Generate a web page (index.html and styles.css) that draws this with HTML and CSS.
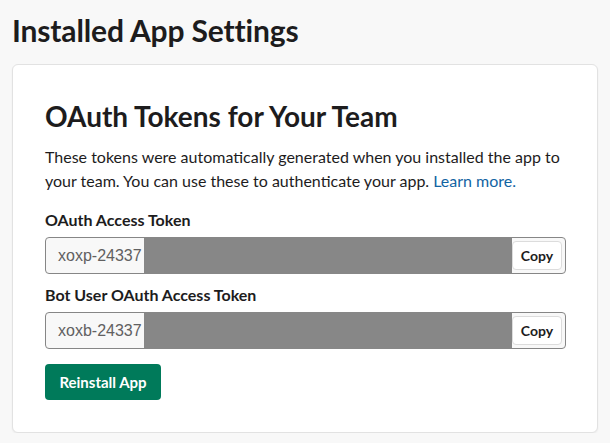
FILE: index.html
```html
<!DOCTYPE html>
<html>
<head>
<meta charset="utf-8">
<link rel="stylesheet" href="styles.css">
</head>
<body>
<div class="page">
  <h1 class="page-title">Installed App Settings</h1>
  <section class="card">
    <h2 class="card-title">OAuth Tokens for Your Team</h2>
    <p class="desc">These tokens were automatically generated when you installed the app to your team. You can use these to authenticate your app. <a class="link" href="#">Learn more.</a></p>
    <div class="field">
      <div class="label">OAuth Access Token</div>
      <div class="token">
        <span class="token-text">xoxp-24337</span>
        <span class="redact"></span>
        <button class="copy">Copy</button>
      </div>
    </div>
    <div class="field">
      <div class="label">Bot User OAuth Access Token</div>
      <div class="token">
        <span class="token-text">xoxb-24337</span>
        <span class="redact"></span>
        <button class="copy">Copy</button>
      </div>
    </div>
    <button class="primary">Reinstall App</button>
  </section>
</div>
</body>
</html>
```
FILE: styles.css
```css
html, body {
  margin: 0;
  padding: 0;
  background: #f8f8f8;
  font-family: Lato, "Noto Sans", sans-serif;
  color: #1d1c1d;
}
.page {
  padding: 10px 12px 0 12px;
}
.page-title {
  margin: 0;
  font-size: 30px;
  font-weight: 700;
  line-height: 40px;
  letter-spacing: -0.15px;
}
.card {
  margin-top: 14px;
  background: #fff;
  border: 1px solid #e2e2e2;
  border-radius: 6px;
  box-shadow: 0 1px 2px rgba(0,0,0,0.06);
  padding: 33px 32px 31px 32px;
  height: 369px;
  box-sizing: border-box;
}
.card-title {
  margin: 0;
  font-size: 28px;
  font-weight: 700;
  line-height: 36px;
}
.desc {
  margin: 11px 0 0 0;
  font-size: 16px;
  line-height: 24px;
}
.link {
  color: #1264a3;
  text-decoration: none;
}
.field {
  margin-top: 16px;
}
.field + .field {
  margin-top: 10px;
}
.label {
  font-size: 16px;
  font-weight: 700;
  line-height: 22px;
  margin-bottom: 6px;
}
.token {
  display: flex;
  align-items: stretch;
  height: 37px;
  box-sizing: border-box;
  border: 1px solid #868686;
  border-radius: 4px;
  background: #f8f8f8;
  width: 521px;
  padding-right: 3px;
}
.token-text {
  padding-left: 12px;
  padding-right: 2px;
  font-family: "Liberation Sans", Arial, sans-serif;
  font-size: 16px;
  color: #616061;
  display: flex;
  align-items: center;
}
.redact {
  flex: 1;
  background: #878787;
  margin: -1px 0;
}
.copy {
  align-self: center;
  height: 29px;
  width: 50px;
  background: #fff;
  border: 1px solid #dcdcdc;
  border-radius: 4px;
  font-family: Lato, sans-serif;
  font-weight: 700;
  font-size: 14px;
  color: #1d1c1d;
  padding: 0;
}
.primary {
  margin-top: 15px;
  height: 36px;
  width: 116px;
  background: #007a5a;
  color: #fff;
  border: none;
  border-radius: 4px;
  font-family: Lato, sans-serif;
  font-weight: 700;
  font-size: 15px;
  padding: 0;
}
```
